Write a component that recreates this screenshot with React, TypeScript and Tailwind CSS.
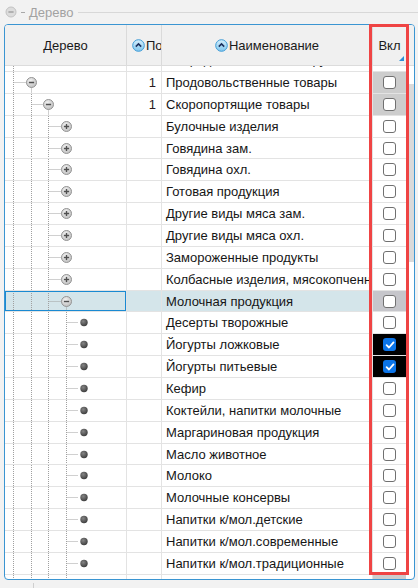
import React from 'react';

type Row = {
  level: number;
  icon: 'minus' | 'plus' | 'dot';
  num?: string;
  name: string;
  check?: 'gray' | 'checked';
  selected?: boolean;
};

const rows: Row[] = [
  { level: 1, icon: 'minus', num: '1', name: 'Продовольственные товары', check: 'gray' },
  { level: 2, icon: 'minus', num: '1', name: 'Скоропортящие товары', check: 'gray' },
  { level: 3, icon: 'plus', name: 'Булочные изделия' },
  { level: 3, icon: 'plus', name: 'Говядина зам.' },
  { level: 3, icon: 'plus', name: 'Говядина охл.' },
  { level: 3, icon: 'plus', name: 'Готовая продукция' },
  { level: 3, icon: 'plus', name: 'Другие виды мяса зам.' },
  { level: 3, icon: 'plus', name: 'Другие виды мяса охл.' },
  { level: 3, icon: 'plus', name: 'Замороженные продукты' },
  { level: 3, icon: 'plus', name: 'Колбасные изделия, мясокопченности' },
  { level: 3, icon: 'minus', name: 'Молочная продукция', check: 'gray', selected: true },
  { level: 4, icon: 'dot', name: 'Десерты творожные' },
  { level: 4, icon: 'dot', name: 'Йогурты ложковые', check: 'checked' },
  { level: 4, icon: 'dot', name: 'Йогурты питьевые', check: 'checked' },
  { level: 4, icon: 'dot', name: 'Кефир' },
  { level: 4, icon: 'dot', name: 'Коктейли, напитки молочные' },
  { level: 4, icon: 'dot', name: 'Маргариновая продукция' },
  { level: 4, icon: 'dot', name: 'Масло животное' },
  { level: 4, icon: 'dot', name: 'Молоко' },
  { level: 4, icon: 'dot', name: 'Молочные консервы' },
  { level: 4, icon: 'dot', name: 'Напитки к/мол.детские' },
  { level: 4, icon: 'dot', name: 'Напитки к/мол.современные' },
  { level: 4, icon: 'dot', name: 'Напитки к/мол.традиционные' },
];

// x of each tree level inside the tree cell
const LX = [8.5, 26.5, 43.5, 61.5, 78.5];

const ExpandIcon = ({ x, y, plus }: { x: number; y: number; plus?: boolean }) => (
  <g>
    <circle cx={x} cy={y} r={5} fill="url(#btnGrad)" stroke="#959595" strokeWidth={1} />
    <line x1={x - 2.6} y1={y} x2={x + 2.6} y2={y} stroke="#505050" strokeWidth={1.4} />
    {plus && <line x1={x} y1={y - 2.6} x2={x} y2={y + 2.6} stroke="#505050" strokeWidth={1.4} />}
  </g>
);

const TreeCell = ({ row, height = 22 }: { row: Row; height?: number }) => {
  const L = row.level;
  const y = 10.5;
  return (
    <svg width={122} height={height} className="block">
      <defs>
        <radialGradient id="btnGrad" cx="40%" cy="35%" r="70%">
          <stop offset="0%" stopColor="#f2f2f2" />
          <stop offset="100%" stopColor="#bdbdbd" />
        </radialGradient>
        <radialGradient id="dotGrad" cx="40%" cy="35%" r="70%">
          <stop offset="0%" stopColor="#858585" />
          <stop offset="100%" stopColor="#3a3a3a" />
        </radialGradient>
      </defs>
      {Array.from({ length: L }).map((_, k) => (
        <line key={k} x1={LX[k]} y1={0} x2={LX[k]} y2={height} stroke="#a0a0a0" strokeDasharray="1 1" />
      ))}
      <line x1={LX[L - 1]} y1={y} x2={LX[L] - 5} y2={y} stroke="#a0a0a0" strokeDasharray="1 1" />
      {row.icon === 'minus' && (
        <line x1={LX[L]} y1={y + 5} x2={LX[L]} y2={height} stroke="#a0a0a0" strokeDasharray="1 1" />
      )}
      {row.icon === 'dot' ? (
        <circle cx={LX[L] + 0.5} cy={y} r={3.7} fill="url(#dotGrad)" />
      ) : (
        <ExpandIcon x={LX[L]} y={y} plus={row.icon === 'plus'} />
      )}
    </svg>
  );
};

const CheckBox = ({ checked }: { checked?: boolean }) =>
  checked ? (
    <div className="w-[13px] h-[13px] rounded-[3px] bg-[#0b74e8] flex items-center justify-center">
      <svg width="10" height="10" viewBox="0 0 10 10">
        <path d="M1.6 5.2 L4 7.5 L8.5 2.4" fill="none" stroke="#fff" strokeWidth="1.8" strokeLinecap="round" strokeLinejoin="round" />
      </svg>
    </div>
  ) : (
    <div className="w-[13px] h-[13px] rounded-[3px] border border-[#707070] bg-white" />
  );

const SortIcon = () => (
  <svg width="13" height="13" viewBox="0 0 13 13" className="shrink-0">
    <defs>
      <linearGradient id="sortGrad" x1="0" y1="0" x2="0" y2="1">
        <stop offset="0%" stopColor="#d6effc" />
        <stop offset="100%" stopColor="#7fc6ee" />
      </linearGradient>
    </defs>
    <circle cx="6.5" cy="6.5" r="5.8" fill="url(#sortGrad)" stroke="#3d9bd6" strokeWidth="1" />
    <path d="M3.8 7.6 L6.5 4.9 L9.2 7.6" fill="none" stroke="#1c2f5c" strokeWidth="1.5" />
  </svg>
);

const DataRow = ({ row }: { row: Row }) => {
  const bg = row.selected ? 'bg-[#d4e5ea]' : 'bg-white';
  const checkBg =
    row.check === 'checked' ? 'bg-black' : row.check === 'gray' ? (row.selected ? 'bg-[#c6c6cb]' : 'bg-[#cdcdcd]') : 'bg-white';
  return (
    <div className="grid grid-cols-[122px_35px_211px_33px] h-[21.86px] shrink-0">
      <div className={`relative overflow-hidden border-b border-r border-[#e3e3e3] ${bg}`}>
        <TreeCell row={row} />
        {row.selected && <div className="absolute inset-0 border border-[#1a8ad2]" />}
      </div>
      <div className={`border-b border-r border-[#e3e3e3] ${bg} flex items-center justify-end pr-[5px] text-[#2a1a1e]`}>
        {row.num}
      </div>
      <div className={`border-b border-r border-[#e3e3e3] ${bg} flex items-center pl-[4px] overflow-hidden whitespace-nowrap text-[#161616]`}>
        {row.name}
      </div>
      <div className={`border-b border-[#e3e3e3] ${checkBg} flex items-center justify-center`}>
        <CheckBox checked={row.check === 'checked'} />
      </div>
    </div>
  );
};

export default function App() {
  return (
    <div
      className="relative w-[418px] h-[588px] overflow-hidden bg-[#f2f2f2] text-[13px] leading-none"
      style={{ fontFamily: '"Liberation Sans", Arial, sans-serif' }}
    >
      {/* group caption */}
      <div className="h-[24px] flex items-center">
        <svg width="12" height="12" viewBox="0 0 12 12" className="ml-[5px]">
          <circle cx="6" cy="6" r="5" fill="#dcdcdc" stroke="#c2c2c2" />
          <line x1="3.4" y1="6" x2="8.6" y2="6" stroke="#9a9a9a" strokeWidth="1.3" />
        </svg>
        <div className="ml-[4px] w-[4px] h-px bg-[#a8a8a8]" />
        <span className="ml-[4px] text-[#a2a2a2]">Дерево</span>
        <div className="ml-[5px] flex-1 h-px bg-[#d8d8d8]" />
      </div>

      {/* panel */}
      <div className="ml-[4px] w-[411px] h-[556px] border border-[#3a95d2] rounded-[4px] overflow-hidden bg-white flex flex-col">
        {/* header */}
        <div className="h-[41px] shrink-0 grid grid-cols-[122px_35px_211px_33px_8px] bg-[#f0f0f0] border-b border-[#dcdcdc] text-[#1a1a1a]">
          <div className="border-r border-[#dadada] flex items-center justify-center">Дерево</div>
          <div className="border-r border-[#dadada] flex items-center pl-[5px] gap-[1px] overflow-hidden whitespace-nowrap">
            <SortIcon />
            <span>Порядок</span>
          </div>
          <div className="border-r border-[#dadada] flex items-center justify-center gap-[1px]">
            <SortIcon />
            <span>Наименование</span>
          </div>
          <div className="relative flex items-center justify-center">
            Вкл
            <svg width="5" height="5" viewBox="0 0 5 5" className="absolute right-[2px] bottom-[4px]">
              <path d="M5 0 L5 5 L0 5 Z" fill="#2d8fd6" />
            </svg>
          </div>
          <div />
        </div>

        {/* body */}
        <div className="flex-1 flex min-h-0">
          <div className="w-[401px] flex flex-col overflow-hidden">
            {/* partially scrolled-out row */}
            <div className="grid grid-cols-[122px_35px_211px_33px] h-[6px] shrink-0 overflow-hidden">
              <div className="border-b border-r border-[#e3e3e3] overflow-hidden">
                <svg width={122} height={6} className="block">
                  <line x1={8.5} y1={0} x2={8.5} y2={6} stroke="#a0a0a0" strokeDasharray="1 1" />
                </svg>
              </div>
              <div className="border-b border-r border-[#e3e3e3]" />
              <div className="border-b border-r border-[#e3e3e3] overflow-hidden whitespace-nowrap pl-[4px]">
                <div className="-mt-[13px] text-[#1e1e1e]">Непродовольственные группы товаров</div>
              </div>
              <div className="border-b border-[#e3e3e3]" />
            </div>
            {rows.map((r, i) => (
              <DataRow key={i} row={r} />
            ))}
            {/* next row, cut off at the bottom */}
            <div className="grid grid-cols-[122px_35px_211px_33px] h-[21.86px] shrink-0">
              <div className="border-r border-[#e3e3e3] overflow-hidden">
                <TreeCell row={{ level: 4, icon: 'dot', name: '' }} />
              </div>
              <div className="border-r border-[#e3e3e3]" />
              <div className="border-r border-[#e3e3e3]" />
              <div className="bg-[#cdcdcd] flex justify-center pt-[4px]">
                <CheckBox />
              </div>
            </div>
          </div>
          {/* scrollbar */}
          <div className="w-[8px] flex justify-end pt-[18px]">
            <div className="w-[5px] h-[178px] bg-[#dadada]" />
          </div>
        </div>
      </div>

      {/* splitter tick below */}
      <div className="ml-[33px] mt-[3px] w-px h-[6px] bg-[#cfcfcf]" />

      {/* annotation box around the column */}
      <div className="absolute left-[369px] top-[24px] w-[40px] h-[551px] border-[3px] border-[#ef4444]" />
    </div>
  );
}
